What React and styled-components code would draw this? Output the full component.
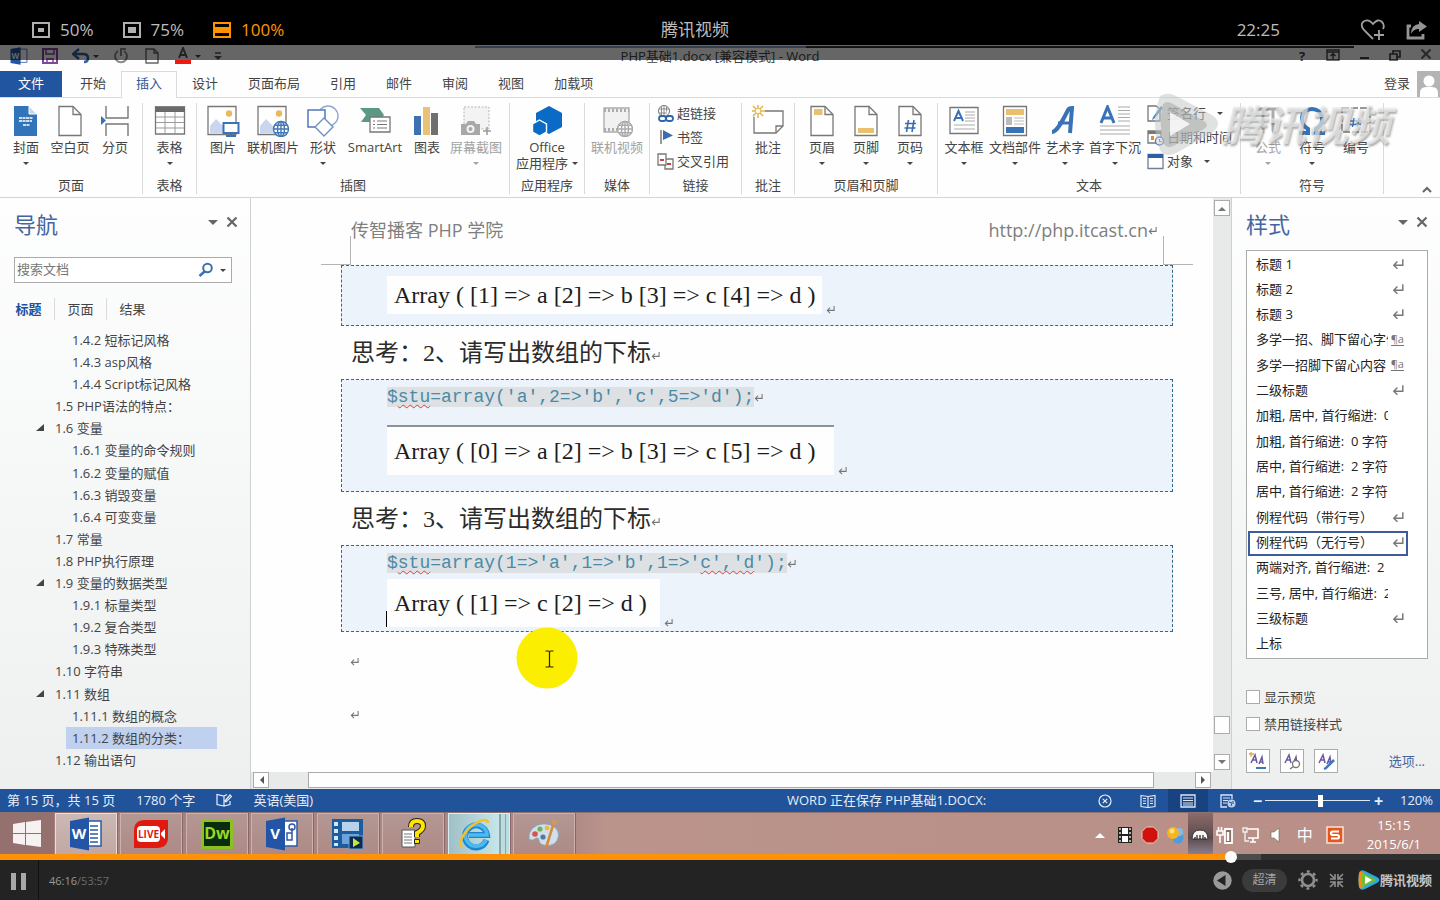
import React from "react";
import styled, { createGlobalStyle, css } from "styled-components";

const blue = "#2b579a";
const line = "#d9dbdb";
const ui = `"Open Sans", "Noto Sans CJK SC", sans-serif`;

const Global = createGlobalStyle`
  *, *::before, *::after { box-sizing: border-box; }
  body { margin: 0; background: #000; font: 13px/16px ${ui}; color: #444; }
  ul { list-style: none; margin: 0; padding: 0; }
  p, h1, h2 { margin: 0; font-weight: 400; }
  svg { display: block; flex: none; }
`;

const plain = css`
  appearance: none;
  border: 0;
  padding: 0;
  margin: 0;
  background: none;
  font: inherit;
  color: inherit;
  white-space: nowrap;
`;

/* ---------- player shell ---------- */

const Player = styled.div`
  min-height: 100vh;
  display: flex;
  flex-direction: column;
`;

const TopBar = styled.header`
  display: grid;
  grid-template-columns: 1fr auto 1fr;
  align-items: center;
  height: 45px;
  padding: 15px 12px 0 32px;
  background: #000;
  color: #bdbdbd;
  font-size: 17px;
  line-height: 24px;
`;

const Zooms = styled.div`
  display: flex;
  gap: 29px;
`;

const ZoomButton = styled.button`
  ${plain}
  display: flex;
  align-items: center;
  gap: 10px;
  color: ${(p) => (p.$on ? "#ff9400" : "#bdbdbd")};
`;

const VideoTitle = styled.span`
  padding-right: 70px;
`;

const TopRight = styled.div`
  display: flex;
  align-items: center;
  justify-content: flex-end;
  color: #a9a9a9;
`;

const Clock = styled.span`
  color: #bdbdbd;
  margin-right: 80px;
`;

const TopIcon = styled.button`
  ${plain}
  margin-left: ${(p) => p.$gap || 0}px;
`;

const Frame = styled.main`
  position: relative;
  flex: 1;
  display: flex;
  flex-direction: column;
  background: #fdfefd;
`;

const Shade = styled.div`
  position: absolute;
  z-index: 2;
  inset: 0 0 auto 0;
  height: 15px;
  background: rgba(0, 0, 0, 0.6);
  pointer-events: none;
`;

/* ---------- word: title, tabs ---------- */

const TitleBar = styled.div`
  display: grid;
  grid-template-columns: 1fr auto 1fr;
  align-items: center;
  height: 26px;
  padding-bottom: 4px;
  background: linear-gradient(90deg, transparent 33%, #7f9cc4 33% 56%, #333 56% 94%, transparent 94%) 0 1px / 100% 2px no-repeat;
`;

const Quick = styled.div`
  display: flex;
  align-items: center;
  gap: 13px;
  padding-left: 10px;
`;

const QuickButton = styled.button`
  ${plain}
  display: flex;
  align-items: center;
  gap: 3px;
`;

const WindowButtons = styled.div`
  display: flex;
  justify-content: flex-end;
  gap: 3px;
`;

const WindowButton = styled.button`
  ${plain}
  width: 28px;
  display: flex;
  justify-content: center;
  font-weight: 700;
`;

const Tabs = styled.nav`
  display: flex;
  height: 27px;
  border-bottom: 1px solid ${line};
`;

const Tab = styled.button`
  ${plain}
  height: 27px;
  padding: 0 14px 4px;
  border: 1px solid transparent;
  border-bottom: 0;
  ${(p) => p.$on && css`
    color: ${blue};
    border-color: ${line};
    background: #fdfefd;
  `}
`;

const FileTab = styled.button`
  ${plain}
  width: 62px;
  height: 26px;
  padding-bottom: 2px;
  margin-right: 3px;
  background: #2255a0;
  color: #fff;
`;

const Account = styled.button`
  ${plain}
  display: flex;
  align-items: center;
  gap: 7px;
  margin-left: auto;
`;

const AccountName = styled.span`
  padding-bottom: 3px;
`;

/* ---------- ribbon ---------- */

const Ribbon = styled.div`
  position: relative;
  display: flex;
  height: 100px;
  padding-top: 5px;
  border-bottom: 1px solid #d2d4d5;
`;

const Group = styled.section`
  display: flex;
  flex-direction: column;
  flex: none;
  justify-content: space-between;
  height: 91px;
  padding-bottom: 1px;
  border-right: 1px solid ${line};
`;

const GroupBody = styled.div`
  display: flex;
  padding: 2px ${(p) => p.$end ?? p.$pad ?? 0}px 0 ${(p) => p.$pad || 0}px;
`;

const GroupName = styled.h2`
  font-size: 13px;
  line-height: 16px;
  text-align: center;
`;

const Tool = styled.button`
  ${plain}
  display: flex;
  flex-direction: column;
  align-items: center;
  justify-content: flex-start;
  width: ${(p) => p.$w}px;
  color: ${(p) => (p.$off ? "#a3a3a3" : "#444")};
`;

const ToolName = styled.span`
  margin-top: 2px;
  line-height: 16px;
`;

const ToolMore = styled.span`
  display: flex;
  align-items: center;
  gap: 4px;
  height: 16px;
`;

const SmallTools = styled.div`
  display: flex;
  flex-direction: column;
  width: ${(p) => p.$w}px;
  padding-left: 7px;
`;

const SmallTool = styled.button`
  ${plain}
  display: flex;
  align-items: center;
  gap: 3px;
  height: 24px;
  margin-top: ${(p) => (p.$first ? "-4px" : 0)};
`;

const SmallMore = styled.span`
  margin-left: 8px;
`;

const Caret = styled.i`
  display: block;
  flex: none;
  border: ${(p) => p.$size || 3}px solid transparent;
  border-top-color: currentColor;
  border-bottom: 0;
`;

const Collapse = styled.button`
  ${plain}
  align-self: flex-end;
  margin: 0 8px 4px auto;
`;

const Watermark = styled.div`
  position: absolute;
  top: -6px;
  right: 50px;
  display: flex;
  align-items: center;
  font-size: 42px;
  line-height: 66px;
  font-style: italic;
  font-weight: 700;
  color: rgba(232, 233, 233, 0.7);
  text-shadow: 1px 2px 2px rgba(100, 100, 100, 0.5);
  pointer-events: none;
`;

/* ---------- workspace ---------- */

const Workspace = styled.div`
  flex: 1;
  display: flex;
`;

const pane = css`
  flex: none;
  display: flex;
  flex-direction: column;
  background: linear-gradient(#fdfefd, #f8f9f9 35%, #eeefef);
`;

const NavPane = styled.aside`
  ${pane}
  width: 251px;
  border-right: 1px solid #cfd1d1;
  padding: 12px 12px 18px 14px;
`;

const StylePane = styled.aside`
  ${pane}
  width: 209px;
  border-left: 1px solid #cfd1d1;
  padding: 12px 12px 16px 14px;
`;

const PaneHead = styled.div`
  display: flex;
  align-items: center;
  gap: 8px;
`;

const PaneTitle = styled.h1`
  flex: 1;
  font-size: 22px;
  line-height: 28px;
  padding-bottom: 4px;
  color: #44659f;
`;

const PaneButton = styled.button`
  ${plain}
  display: flex;
  margin-top: -8px;
  color: #666;
`;

const SearchBox = styled.label`
  display: flex;
  align-items: center;
  gap: 6px;
  height: 26px;
  margin: 15px 6px 0 0;
  padding: 0 5px 0 2px;
  border: 1px solid #ababab;
  background: #fff;
`;

const SearchInput = styled.input`
  ${plain}
  flex: 1;
  min-width: 0;
  padding-bottom: 2px;
  outline: 0;
  &::placeholder { color: #777; opacity: 1; }
`;

const NavTabs = styled.div`
  display: flex;
  margin: 15px 0 9px -12px;
`;

const NavTab = styled.button`
  ${plain}
  width: 52px;
  height: 22px;
  border-left: 1px solid ${(p) => (p.$on ? "transparent" : line)};
  color: ${(p) => (p.$on ? "#1f4e9a" : "#444")};
  font-weight: ${(p) => (p.$on ? 700 : 400)};
`;

const Tree = styled.ul`
  flex: 1;
  display: flex;
  flex-direction: column;
  justify-content: space-between;
  padding-right: 21px;
`;

const TreeLink = styled.a`
  display: flex;
  align-items: center;
  height: 22px;
  margin-left: ${(p) => (p.$deep ? 52 : 22)}px;
  padding-left: ${(p) => (p.$deep ? 6 : 0)}px;
  color: inherit;
  text-decoration: none;
  white-space: nowrap;
  background: ${(p) => (p.$on ? "#c0d1f0" : "none")};
`;

const Twist = styled.span`
  width: 19px;
  display: flex;
`;

const Editor = styled.div`
  flex: 1;
  min-width: 0;
  display: flex;
  flex-direction: column;
  background: #e8e9e9;
`;

const EditorRow = styled.div`
  flex: 1;
  display: flex;
`;

const Page = styled.article`
  position: relative;
  flex: 1;
  background: #fdfefd;
  padding: 0 20px 0 70px;
`;

const PageHead = styled.div`
  display: flex;
  align-items: flex-end;
  height: 67px;
  color: #7f7f7f;
  white-space: nowrap;
`;

const Corner = styled.div`
  width: 30px;
  height: 29px;
  border-bottom: 1px solid #b4b4b4;
  border-${(p) => p.$side}: 1px solid #b4b4b4;
`;

const HeadText = styled.span`
  display: flex;
  align-items: center;
  font-size: 18px;
  line-height: 24px;
  padding-bottom: 23px;
  margin-left: ${(p) => (p.$end ? "auto" : 0)};
  margin-right: ${(p) => (p.$end ? 6 : 0)}px;
`;

const CodeBox = styled.section`
  height: ${(p) => p.$h}px;
  margin: 0 20px;
  padding: ${(p) => p.$top}px 0 0 45px;
  border: 1px dashed #2f6a8a;
  background: #edf3fa;
`;

const CodeLine = styled.p`
  display: flex;
  align-items: center;
  font: 18px/20px "Liberation Mono", monospace;
  color: #4a8aa8;
  white-space: nowrap;
  margin-bottom: ${(p) => p.$below}px;
`;

const Code = styled.code`
  font: inherit;
  background: #dde1e3;
`;

const Misspelt = styled.span`
  text-decoration: underline wavy #e0403a 1px;
  text-decoration-skip-ink: none;
  text-underline-offset: 2px;
`;

const Shot = styled.div`
  display: flex;
  align-items: flex-end;
  gap: 4px;
`;

const ShotText = styled.p`
  position: relative;
  width: ${(p) => p.$w}px;
  padding: ${(p) => p.$pad}px 7px;
  font: 24px/30px "Liberation Serif", serif;
  color: #1c1c1c;
  background: #fdfefd;
  white-space: nowrap;
  border-top: ${(p) => (p.$rule ? "2px solid #8f9396" : "0")};
  ${(p) => p.$caret && css`
    &::before {
      content: "";
      position: absolute;
      left: -1px;
      bottom: 0;
      width: 1px;
      height: 16px;
      background: #000;
    }
  `}
`;

const Para = styled.p`
  display: flex;
  align-items: center;
  height: 53px;
  padding-left: ${(p) => (p.$empty ? 29 : 30)}px;
  font: 24px/32px "Liberation Serif", "Noto Sans CJK SC", serif;
  color: #2b2b2b;
  white-space: nowrap;
  svg { margin-top: 6px; }
`;

const Pointer = styled.div`
  position: absolute;
  left: 265px;
  top: 429px;
`;

const VScroll = styled.div`
  width: 18px;
  display: flex;
  flex-direction: column;
  align-items: center;
  padding: 2px 0;
`;

const HScroll = styled.div`
  display: flex;
  height: 17px;
  padding: 0 20px 0 2px;
`;

const ScrollButton = styled.button`
  ${plain}
  width: 16px;
  height: 16px;
  display: grid;
  place-items: center;
  border: 1px solid #ababab;
  background: #fdfefd;
  color: #666;
`;

const Thumb = styled.div`
  border: 1px solid #ababab;
  background: #fdfefd;
  ${(p) => (p.$v
    ? css`width: 16px; height: 18px; margin: auto 0 20px;`
    : css`flex: 1; height: 16px; margin: 0 41px 0 39px;`)}
`;

const StyleList = styled.ul`
  flex: 1;
  display: flex;
  flex-direction: column;
  justify-content: space-between;
  margin-top: 8px;
  padding: 1px;
  border: 1px solid #ababab;
  background: #fff;
`;

const StyleItem = styled.button`
  ${plain}
  display: flex;
  align-items: center;
  justify-content: space-between;
  width: 160px;
  height: 25px;
  padding: 0 2px 2px 6px;
  color: #222;
  border: 2px solid ${(p) => (p.$on ? "#3c5d9b" : "transparent")};
`;

const StyleName = styled.span`
  width: 132px;
  overflow: hidden;
  text-align: left;
  white-space: pre;
`;

const LinkMark = styled.span`
  font-size: 11px;
  line-height: 12px;
  border-bottom: 1px solid #777;
  color: #777;
`;

const Check = styled.label`
  display: flex;
  align-items: center;
  gap: 4px;
  height: 27px;
`;

const CheckInput = styled.input`
  appearance: none;
  width: 14px;
  height: 14px;
  margin: 0;
  border: 1px solid #ababab;
  background: #fff;
`;

const Checks = styled.div`
  margin-top: 24px;
`;

const PaneFoot = styled.div`
  display: flex;
  align-items: center;
  gap: 10px;
  margin-top: 12px;
  padding-right: 3px;
`;

const SquareButton = styled.button`
  ${plain}
  width: 24px;
  height: 24px;
  border: 1px solid #ababab;
  background: #fdfefd;
  display: grid;
  place-items: center;
`;

const Options = styled.a`
  margin-left: auto;
  color: #44659f;
  text-decoration: none;
`;

/* ---------- status bar ---------- */

const Status = styled.footer`
  display: flex;
  align-items: center;
  height: 23px;
  padding: 0 7px;
  background: #21539a;
  color: #e6eefa;
  white-space: nowrap;
`;

const StatusItem = styled.span`
  margin-right: 21px;
  padding-bottom: 2px;
`;

const StatusRight = styled.div`
  flex: 0 0 646px;
  margin-left: auto;
  display: flex;
  align-items: center;
`;

const Saving = styled.span`
  padding-bottom: 2px;
`;

const CancelButton = styled.button`
  ${plain}
  margin: 0 16px 0 auto;
`;

const ViewButtons = styled.div`
  display: flex;
  margin-right: 5px;
`;

const ViewButton = styled.button`
  ${plain}
  display: grid;
  place-items: center;
  width: 40px;
  height: 23px;
  background: ${(p) => (p.$on ? "#174481" : "none")};
`;

const ZoomSide = styled.span`
  width: 8px;
  font-size: 16px;
  font-weight: 700;
  text-align: center;
`;

const ZoomRange = styled.input`
  appearance: none;
  width: 105px;
  height: 12px;
  margin: 0 4px;
  background: linear-gradient(#dfe8f5, #dfe8f5) 0 50% / 100% 1px no-repeat;
  &::-webkit-slider-thumb {
    appearance: none;
    width: 5px;
    height: 12px;
    background: #fff;
  }
`;

const Percent = styled.span`
  width: 51px;
  padding-bottom: 2px;
  text-align: right;
`;

/* ---------- taskbar ---------- */

const Taskbar = styled.div`
  display: flex;
  align-items: stretch;
  height: 42px;
  background: linear-gradient(90deg, #a67f7c 0, #b08a86 40%, #ba938b 42%, #b98f87 100%);
  border-top: 1px solid #8d7274;
  color: #fff;
`;

const Start = styled.button`
  ${plain}
  width: 54px;
  display: grid;
  place-items: center;
  background: #94706e;
`;

const Apps = styled.div`
  display: flex;
  justify-content: space-between;
  width: 521px;
  padding-left: 1px;
`;

const TaskButton = styled.button`
  ${plain}
  width: 62px;
  display: grid;
  place-items: center;
  border: 1px solid #cdb1ad;
  border-bottom: 0;
  background: linear-gradient(#b39793, #ae8a86);
  box-shadow: 1px 0 0 #86686a;
  ${(p) => p.$look === "active" && css`background: linear-gradient(#cbb8b4, #c2a8a4); border-color: #eadcd9;`}
  ${(p) => p.$look === "glow" && css`
    background: linear-gradient(90deg, #9fc0c6, #c6e6ea 84%, #8aa6ab 84% 87%, #bcdde0 87% 93%, #8aa6ab 93% 95%, #bcdde0 95%);
    border-color: #d9f0f2;
    padding-right: 8px;
  `}
`;

const Tray = styled.div`
  display: flex;
  align-items: center;
  margin-left: auto;
  padding-right: 19px;
`;

const TrayItem = styled.button`
  ${plain}
  width: ${(p) => p.$w || 25}px;
  height: 41px;
  padding-top: 2px;
  display: grid;
  place-items: center;
  font-size: 16px;
  background: ${(p) => (p.$dark ? "linear-gradient(#8b6c6a, #5d4a4b 60%, #8a7e90)" : "none")};
`;

const TrayClock = styled.time`
  text-align: center;
  line-height: 19px;
  margin-left: 18px;
  padding-top: 2px;
`;

/* ---------- player controls ---------- */

const Seek = styled.input`
  appearance: none;
  display: block;
  position: relative;
  z-index: 3;
  width: 100%;
  height: 6px;
  margin: 0;
  background: linear-gradient(90deg, #ff9206 0 85.5%, #4c4c4c 85.5% 87.6%, #303030 87.6%);
  &::-webkit-slider-thumb {
    appearance: none;
    width: 12px;
    height: 12px;
    border-radius: 50%;
    background: #fff;
  }
`;

const Controls = styled.footer`
  display: flex;
  align-items: center;
  height: 40px;
  padding-right: 8px;
  background: #232323;
  color: #8c8c8c;
`;

const Pause = styled.button`
  ${plain}
  width: 39px;
  height: 40px;
  padding: 3px 0 0 11px;
  border-right: 1px solid #111;
`;

const Times = styled.span`
  padding: 2px 0 0 10px;
  font-size: 11px;
  color: #6c6c6c;
`;

const Now = styled.b`
  font-weight: 400;
  color: #999;
`;

const ControlsRight = styled.div`
  display: flex;
  align-items: center;
  margin-left: auto;
`;

const Control = styled.button`
  ${plain}
  margin-right: ${(p) => p.$after}px;
`;

const Quality = styled.button`
  ${plain}
  height: 23px;
  width: 45px;
  margin-right: 11px;
  border-radius: 12px;
  background: #3b3b3b;
  font-size: 12px;
  color: #a5a5a5;
`;

const Brand = styled.a`
  display: flex;
  align-items: center;
  font-weight: 700;
  color: #c4c4c4;
  text-decoration: none;
  white-space: nowrap;
`;

/* ---------- drawings ---------- */

const Svg = ({ w = 32, h = w, vw = w, vh = h, children }) => (
  <svg width={w} height={h} viewBox={`0 0 ${vw} ${vh}`} fill="none" aria-hidden="true">{children}</svg>
);

const G = "#777";
const Sheet = ({ children }) => (
  <Svg><path d="M5 1.500h14l8 8v21H5z" fill="#fff" stroke={G} strokeWidth="1.300" /><path d="M19 1.500v8h8" stroke={G} strokeWidth="1.300" />{children}</Svg>
);
const Globe = ({ x, y, c }) => (
  <g transform={`translate(${x} ${y})`} stroke={c} strokeWidth="1.400" fill="#fff">
    <circle r="7.500" /><ellipse rx="3.500" ry="7.500" fill="none" /><path d="M-7.500 0h15M-6.500-3.800h13M-6.500 3.800h13M0-7.500v15" />
  </g>
);
const Photo = ({ children }) => (
  <Svg w={34} h={32}>
    <path d="M2 1.500h28v28H2z" fill="#fff" stroke={G} strokeWidth="1.300" />
    <path d="M4 28v-7l6-7 8 8v6z" fill="#c9d6ee" /><circle cx="23" cy="8.500" r="3.200" fill="#eab95c" />{children}
  </Svg>
);

const icons = {
  cover: <Svg><path d="M4 1h15l8 8v22H4z" fill="#3274ba" /><path d="M19 1v8h8z" fill="#c4d9ee" stroke="#fff" /><path d="M9 13h14M9 16h13M13 20h7" stroke="#fff" strokeWidth="1.600" strokeDasharray="3 .5" /></Svg>,
  blank: <Sheet />,
  brk: <Svg><path d="M7 1v12h22V1M7 31V19h22v12" stroke={G} strokeWidth="1.400" /><path d="M2 11v9l5-4.500z" fill="#3274ba" /></Svg>,
  table: <Svg><path d="M1.500 2h29v27h-29z" fill="#fff" stroke={G} strokeWidth="1.300" /><path d="M1 1.500h30V7H1z" fill="#6b6b6b" /><path d="M2 12h28M2 17.500h28M2 23h28M11 7v22M21 7v22" stroke="#9b9b9b" /></Svg>,
  pic: <Photo><path d="M17.500 18h15v10h-15z" fill="#fff" stroke="#3a73b5" strokeWidth="2" /><path d="M25 28v3M20 31h10" stroke="#3a73b5" strokeWidth="2" /></Photo>,
  webpic: <Photo><Globe x={25} y={24} c="#4077b5" /></Photo>,
  shapes: <Svg><circle cx="21" cy="11" r="10" stroke="#8fa9d3" strokeWidth="1.400" fill="#fff" /><path d="M1 5h17v17H1z" fill="#fff" stroke="#5278b5" strokeWidth="1.500" /><path d="M17 13l9 9-9 9-9-9z" fill="#fff" stroke="#6d8fc4" strokeWidth="1.400" /></Svg>,
  smart: <Svg><path d="M1 3h19l5 7-5 7H2l5-7z" fill="#5b9a82" /><path d="M11 12h20v15H11z" fill="#fff" stroke={G} strokeWidth="1.300" /><path d="M14 16h2M18 16h10M14 19.500h2M18 19.500h10M14 23h2M18 23h10" stroke={G} /></Svg>,
  chart: <Svg><path d="M3 11h7v19H3z" fill="#3c72b4" /><path d="M12 2h7v28h-7z" fill="#eac277" /><path d="M20 8h7v22h-7z" fill="#6f6f6f" /></Svg>,
  shot: <Svg><path d="M4 2h25v22H4z" stroke="#b5b5b5" strokeDasharray="2 1.500" fill="#f3f3f3" /><path d="M1 19h5l2-3h6l2 3h4v11H1z" fill="#a8a8a8" /><circle cx="10.500" cy="24" r="4" fill="#f3f3f3" /><circle cx="10.500" cy="24" r="2" fill="#a8a8a8" /><path d="M27 22v8M23 26h8" stroke="#999" strokeWidth="1.500" /></Svg>,
  office: <Svg><path d="M18 1l13 7v14l-13 7-13-7V8z" fill="#0a6bc7" /><path d="M8.500 15l7 4v8l-7 4-7-4v-8z" fill="#0a6bc7" stroke="#fdfefd" strokeWidth="1.400" /></Svg>,
  video: <Svg><path d="M3 3h25v24H3z" fill="#f1f1f1" stroke="#aaa" strokeWidth="1.300" /><path d="M3 5.500h25M3 24.500h25" stroke="#aaa" strokeWidth="3" strokeDasharray="2 2" /><Globe x={24} y={24} c="#aaa" /></Svg>,
  note: <Svg><path d="M2 6h29v15l-7 7H2z" fill="#fff" stroke={G} strokeWidth="1.300" /><path d="M31 21h-7v7" stroke={G} strokeWidth="1.300" /><circle cx="6" cy="6" r="7" fill="#fff" /><path d="M6-1v14M-1 6h14M1 1l10 10M11 1L1 11" stroke="#e8b450" strokeWidth="1.600" /><circle cx="6" cy="6" r="2.800" fill="#fff" stroke="#e8b450" /></Svg>,
  header: <Sheet><path d="M8 4h8.500v6H8z" fill="#e9c06f" /></Sheet>,
  footer: <Sheet><path d="M8 23h16v5H8z" fill="#e9c06f" /></Sheet>,
  pageno: <Sheet><path d="M14.500 15l-2 12M20 15l-2 12M11 18.500h11M10.500 23h11" stroke="#3a6db0" strokeWidth="1.600" /></Sheet>,
  textbox: <Svg><path d="M2 2.500h28v26H2z" fill="#fff" stroke={G} strokeWidth="1.300" /><path d="M6 16l4.500-10L15 16M7.500 13h6" stroke="#3a73b5" strokeWidth="2" /><path d="M17 7h10M17 10h10M17 13h10M17 16h10M6 20h21M6 24h21" stroke="#aaa" /></Svg>,
  parts: <Svg><path d="M4.500 1.500h23v29h-23z" fill="#fff" stroke={G} strokeWidth="1.300" /><path d="M7 4h18v6H7z" fill="#e9c06f" /><path d="M7 12h6v8H7z" fill="#bbb" /><path d="M15 13h10M15 16h10M15 19h10" stroke="#bbb" /><path d="M7 22h18v6H7z" fill="#3a73b5" /></Svg>,
  art: <Svg><path d="M3 27c5 0 10-10 16-22 1-2 2-2 4-2l-2 25" stroke="#3a73b5" strokeWidth="4" /><path d="M9 18h13" stroke="#3a73b5" strokeWidth="3" /></Svg>,
  drop: <Svg><path d="M2 18L8.500 2 15 18M4.500 13h8" stroke="#3a73b5" strokeWidth="3" /><path d="M19 2h12M19 5.500h12M19 9h12M19 12.500h12M19 16h12M1 21h30M1 25h30M1 29h30" stroke="#aaa" /></Svg>,
  formula: <Svg><path d="M5 4h22M11 4v24M21 4v21q0 3 4 3" stroke="#aaa" strokeWidth="3" /></Svg>,
  omega: <Svg><path d="M3 28h9v-4C2 18 5 4 16 4s14 14 4 20v4h9" stroke="#3274ba" strokeWidth="4" /></Svg>,
  number: <Svg><path d="M2 3h28v24H2z" stroke={G} strokeWidth="1.400" strokeDasharray="7 2" /><path d="M14 13l-1.500 9M19 13l-1.500 9M10 16h11M10 19.500h11" stroke="#3a6db0" strokeWidth="1.400" /></Svg>,
  link: <Svg w={17}><circle cx="7" cy="6" r="5.500" stroke="#777" /><path d="M2 4h10M2 8h8M7 1v10M4.500 1.500v9M9.500 1.500v5" stroke="#777" strokeWidth=".8" /><rect x="2" y="11" width="7" height="5" rx="2.500" stroke="#2f66ac" strokeWidth="1.800" /><rect x="9" y="11" width="7" height="5" rx="2.500" stroke="#2f66ac" strokeWidth="1.800" /></Svg>,
  flag: <Svg w={17}><path d="M4 1v14" stroke="#777" strokeWidth="1.500" /><path d="M6 1l10 5.500L6 11z" fill="#3a6db0" /></Svg>,
  xref: <Svg w={17}><path d="M1 1h8v11H1zM9 6h7v10H8v-4" stroke="#777" strokeWidth="1.300" /><path d="M3 7h4M10 11h4" stroke="#cc3d3d" strokeWidth="2" /></Svg>,
  sign: <Svg w={17}><path d="M1 1h8l4 3v12H1z" stroke="#777" fill="#fff" strokeWidth="1.300" /><path d="M16 3L7 14l-2 1 1-3L14 1z" fill="#4f8bc4" /></Svg>,
  date: <Svg w={17}><path d="M1 2h13v12H1z" stroke="#777" strokeWidth="1.300" fill="#fff" /><path d="M1 3.500h13" stroke="#777" strokeWidth="3" /><path d="M4 7h3v4H4z" fill="#dd8a3c" /><circle cx="12.500" cy="12" r="4" fill="#fff" stroke="#4f7cb5" strokeWidth="1.400" /><path d="M12.500 10v2.500h2" stroke="#4f7cb5" /></Svg>,
  object: <Svg w={17}><path d="M1 1.500h15v14H1z" fill="#fff" stroke="#6e7f99" strokeWidth="1.300" /><path d="M1 1h15v4H1z" fill="#2f5fa3" /></Svg>,
};

const ReturnMark = ({ size = 9 }) => (
  <Svg w={size} vw={10} vh={10}><path d="M9 1v5H1.500M4.500 3L1.500 6l3 3" stroke="#777" strokeWidth="1.200" /></Svg>
);

const Close = () => <Svg w={12}><path d="M1.500 1.500l9 9M10.500 1.500l-9 9" stroke="#666" strokeWidth="2.200" /></Svg>;

const OfficeTile = ({ letter, size = 34, children }) => (
  <Svg w={size} vw={34} vh={34}>
    <path d="M17 4h15v25H17z" fill="#fff" stroke="#2c5aa8" strokeWidth="1.500" />
    {children}
    <path d="M1 4l19-3.500v33L1 30z" fill="#2355a6" />
    <text x="10" y="22" textAnchor="middle" fontSize="15" fontWeight="700" fontFamily="Open Sans" fill="#fff">{letter}</text>
  </Svg>
);

/* ---------- data ---------- */

const outline = [
  ["1.4.2 短标记风格", 1], ["1.4.3 asp风格", 1], ["1.4.4 Script标记风格", 1], ["1.5 PHP语法的特点：", 0],
  ["1.6 变量", 0, 1], ["1.6.1 变量的命令规则", 1], ["1.6.2 变量的赋值", 1], ["1.6.3 销毁变量", 1],
  ["1.6.4 可变变量", 1], ["1.7 常量", 0], ["1.8 PHP执行原理", 0], ["1.9 变量的数据类型", 0, 1],
  ["1.9.1 标量类型", 1], ["1.9.2 复合类型", 1], ["1.9.3 特殊类型", 1], ["1.10 字符串", 0],
  ["1.11 数组", 0, 1], ["1.11.1 数组的概念", 1], ["1.11.2 数组的分类：", 1, 0, 1], ["1.12 输出语句", 0],
];

const styleNames = [
  ["标题 1", "r"], ["标题 2", "r"], ["标题 3", "r"], ["多学一招、脚下留心字体", "a"], ["多学一招脚下留心内容", "a"],
  ["二级标题", "r"], ["加粗, 居中, 首行缩进:  0"], ["加粗, 首行缩进:  0 字符"], ["居中, 首行缩进:  2 字符"],
  ["居中, 首行缩进:  2 字符"], ["例程代码（带行号）", "r"], ["例程代码（无行号）", "r", 1], ["两端对齐, 首行缩进:  2"],
  ["三号, 居中, 首行缩进:  2"], ["三级标题", "r"], ["上标"],
];

const T = ({ icon, name, w, more, off }) => (
  <Tool $w={w} $off={off}>
    {icons[icon]}
    <ToolName>{name}</ToolName>
    {more && <ToolMore>{more !== true && more}<Caret /></ToolMore>}
  </Tool>
);

const S = ({ icon, name, first, more }) => (
  <SmallTool $first={first}>{icons[icon]}<span>{name}</span>{more && <SmallMore><Caret /></SmallMore>}</SmallTool>
);

const RibbonGroup = ({ name, pad, end, children }) => (
  <Group><GroupBody $pad={pad} $end={end}>{children}</GroupBody><GroupName>{name}</GroupName></Group>
);

const WordRibbon = () => (
  <Ribbon>
    <RibbonGroup name="页面" pad={4}>
      <T icon="cover" name="封面" w={44} more /><T icon="blank" name="空白页" w={44} /><T icon="brk" name="分页" w={46} />
    </RibbonGroup>
    <RibbonGroup name="表格"><T icon="table" name="表格" w={53} more /></RibbonGroup>
    <RibbonGroup name="插图" end={10}>
      <T icon="pic" name="图片" w={52} /><T icon="webpic" name="联机图片" w={48} /><T icon="shapes" name="形状" w={52} more />
      <T icon="smart" name="SmartArt" w={52} /><T icon="chart" name="图表" w={52} /><T icon="shot" name="屏幕截图" w={46} more off />
    </RibbonGroup>
    <RibbonGroup name="应用程序"><T icon="office" name="Office" w={74} more="应用程序" /></RibbonGroup>
    <RibbonGroup name="媒体"><T icon="video" name="联机视频" w={64} off /></RibbonGroup>
    <RibbonGroup name="链接">
      <SmallTools $w={91}><S icon="link" name="超链接" first /><S icon="flag" name="书签" /><S icon="xref" name="交叉引用" /></SmallTools>
    </RibbonGroup>
    <RibbonGroup name="批注"><T icon="note" name="批注" w={52} /></RibbonGroup>
    <RibbonGroup name="页眉和页脚" pad={5}>
      <T icon="header" name="页眉" w={44} more /><T icon="footer" name="页脚" w={44} more /><T icon="pageno" name="页码" w={44} more />
    </RibbonGroup>
    <RibbonGroup name="文本">
      <T icon="textbox" name="文本框" w={52} more /><T icon="parts" name="文档部件" w={50} more />
      <T icon="art" name="艺术字" w={50} more /><T icon="drop" name="首字下沉" w={50} more />
      <SmallTools $w={100}><S icon="sign" name="签名行" first more /><S icon="date" name="日期和时间" /><S icon="object" name="对象" more /></SmallTools>
    </RibbonGroup>
    <RibbonGroup name="符号" pad={5}>
      <T icon="formula" name="公式" w={44} more off /><T icon="omega" name="符号" w={44} more /><T icon="number" name="编号" w={44} />
    </RibbonGroup>
    <Collapse aria-label="折叠功能区"><Svg w={10} h={8}><path d="M1 7l4-4 4 4" stroke="#666" strokeWidth="2" /></Svg></Collapse>
    <Watermark>
      <Svg w={76} h={66}>
        <path d="M14 4q8-5 18 1l34 18q12 8 0 18L32 60q-12 7-18-2Q4 32 14 4z" fill="#c4c6c5" fillOpacity=".5" />
        <path d="M17 12q4-4 10 0l31 17q6 4 0 8L27 54q-6 3-9-2-6-20-1-40z" fill="#a7a9a8" fillOpacity=".55" />
        <path d="M24 20l20 12-20 12z" fill="#fff" fillOpacity=".8" />
      </Svg>
      腾讯视频
    </Watermark>
  </Ribbon>
);

const Navigation = () => (
  <NavPane>
    <PaneHead>
      <PaneTitle>导航</PaneTitle>
      <PaneButton aria-label="菜单"><Caret $size={5} /></PaneButton>
      <PaneButton aria-label="关闭"><Close /></PaneButton>
    </PaneHead>
    <SearchBox>
      <SearchInput aria-label="搜索文档" placeholder="搜索文档" />
      <Svg w={16}><circle cx="9.500" cy="6" r="4.300" stroke="#3d6eb5" strokeWidth="2" /><path d="M6.500 9.500L1.500 14" stroke="#3d6eb5" strokeWidth="2.500" /></Svg>
      <Caret />
    </SearchBox>
    <NavTabs><NavTab $on>标题</NavTab><NavTab>页面</NavTab><NavTab>结果</NavTab></NavTabs>
    <Tree>
      {outline.map(([text, deep, open, on]) => (
        <li key={text}>
          <TreeLink href="#" $deep={deep} $on={on}>
            {!deep && <Twist>{open ? <Svg w={8}><path d="M8 0v7H0z" fill="#444" /></Svg> : null}</Twist>}
            {text}
          </TreeLink>
        </li>
      ))}
    </Tree>
  </NavPane>
);

const Document = () => (
  <Editor>
    <EditorRow>
      <Page>
        <PageHead>
          <Corner $side="right" />
          <HeadText>传智播客 PHP 学院</HeadText>
          <HeadText $end>http://php.itcast.cn<ReturnMark /></HeadText>
          <Corner $side="left" />
        </PageHead>
        <CodeBox $h={61} $top={10}>
          <Shot><ShotText $w={435} $pad={4}>{"Array ( [1] => a [2] => b [3] => c [4] => d )"}</ShotText><ReturnMark /></Shot>
        </CodeBox>
        <Para>思考：2、请写出数组的下标<ReturnMark /></Para>
        <CodeBox $h={113} $top={7}>
          <CodeLine $below={18}><Code>$<Misspelt>stu</Misspelt>{"=array('a',2=>'b','c',5=>'d');"}</Code><ReturnMark /></CodeLine>
          <Shot><ShotText $w={447} $pad={9} $rule>{"Array ( [0] => a [2] => b [3] => c [5] => d )"}</ShotText><ReturnMark /></Shot>
        </CodeBox>
        <Para>思考：3、请写出数组的下标<ReturnMark /></Para>
        <CodeBox $h={87} $top={7}>
          <CodeLine $below={6}><Code>$<Misspelt>stu</Misspelt>{"=array(1=>'a',1=>'b',1=>'"}<Misspelt>c','d</Misspelt>{"');"}</Code><ReturnMark /></CodeLine>
          <Shot><ShotText $w={273} $pad={9} $caret>{"Array ( [1] => c [2] => d )"}</ShotText><ReturnMark /></Shot>
        </CodeBox>
        <Para $empty><ReturnMark /></Para>
        <Para $empty><ReturnMark /></Para>
        <Pointer>
          <Svg w={62}><circle cx="31" cy="31" r="30.500" fill="#fbee00" /><path d="M29.500 24h3q1 0 1 2v12q0 2-1 2h-3M37.500 24h-3q-1 0-1 2M37.500 40h-3q-1 0-1-2" stroke="#222" strokeWidth="1.200" /></Svg>
        </Pointer>
      </Page>
      <VScroll>
        <ScrollButton aria-label="向上滚动"><Svg w={8} h={5}><path d="M0 5l4-4 4 4z" fill="#777" /></Svg></ScrollButton>
        <Thumb $v />
        <ScrollButton aria-label="向下滚动"><Svg w={8} h={5}><path d="M0 0l4 4 4-4z" fill="#777" /></Svg></ScrollButton>
      </VScroll>
    </EditorRow>
    <HScroll>
      <ScrollButton aria-label="向左滚动"><Svg w={5} h={8}><path d="M5 0L1 4l4 4z" fill="#555" /></Svg></ScrollButton>
      <Thumb />
      <ScrollButton aria-label="向右滚动"><Svg w={5} h={8}><path d="M0 0l4 4-4 4z" fill="#555" /></Svg></ScrollButton>
    </HScroll>
  </Editor>
);

const StyleIcon = ({ children }) => (
  <Svg w={20}><path d="M3 12l4-8 2 8M5 9h4M11 13l3-7 1 7M12 11h3" stroke="#6a5aa0" strokeWidth="1.500" />{children}</Svg>
);

const Styles = () => (
  <StylePane>
    <PaneHead>
      <PaneTitle>样式</PaneTitle>
      <PaneButton aria-label="菜单"><Caret $size={5} /></PaneButton>
      <PaneButton aria-label="关闭"><Close /></PaneButton>
    </PaneHead>
    <StyleList>
      {styleNames.map(([name, mark, on], i) => (
        <li key={i}>
          <StyleItem $on={on}>
            <StyleName>{name}</StyleName>
            {mark === "r" && <ReturnMark size={12} />}
            {mark === "a" && <LinkMark>¶a</LinkMark>}
          </StyleItem>
        </li>
      ))}
    </StyleList>
    <Checks>
      <Check><CheckInput type="checkbox" />显示预览</Check>
      <Check><CheckInput type="checkbox" />禁用链接样式</Check>
    </Checks>
    <PaneFoot>
      <SquareButton aria-label="新建样式"><StyleIcon><path d="M3 1v5M1 3h5" stroke="#e0a94a" strokeWidth="1.300" /><path d="M8 17h10" stroke="#3d78bb" strokeWidth="2" /></StyleIcon></SquareButton>
      <SquareButton aria-label="样式检查器"><StyleIcon><circle cx="14" cy="13" r="3.500" fill="#fff" stroke="#777" strokeWidth="1.300" /><path d="M11.500 15.500L8 18" stroke="#777" strokeWidth="1.500" /></StyleIcon></SquareButton>
      <SquareButton aria-label="管理样式"><StyleIcon><path d="M18 9l-8 8-2 1" stroke="#3d78bb" strokeWidth="2.500" /></StyleIcon></SquareButton>
      <Options href="#">选项...</Options>
    </PaneFoot>
  </StylePane>
);

const WordStatus = () => (
  <Status>
    <StatusItem>第 15 页，共 15 页</StatusItem>
    <StatusItem>1780 个字</StatusItem>
    <StatusItem><Svg w={16} h={14}><path d="M8 3v10l-7-1.500V1.500L8 3l3-1.500M8 13l6-1.500V8M9 8l5-6 1.500 1.500L10 9z" stroke="#e6eefa" strokeWidth="1.200" /></Svg></StatusItem>
    <StatusItem>英语(美国)</StatusItem>
    <StatusRight>
      <Saving>WORD 正在保存 PHP基础1.DOCX:</Saving>
      <CancelButton aria-label="取消"><Svg w={14}><circle cx="7" cy="7" r="6" stroke="#e6eefa" strokeWidth="1.200" /><path d="M4.800 4.800l4.400 4.400M9.200 4.800L4.800 9.200" stroke="#e6eefa" strokeWidth="1.200" /></Svg></CancelButton>
      <ViewButtons>
        <ViewButton aria-label="阅读视图"><Svg w={16} h={14}><path d="M8 2.500v11M1 1.500l7 1 7-1v11l-7 1-7-1z" stroke="#dce6f5" strokeWidth="1.200" /><path d="M3 4.500h3M3 7h3M3 9.500h3M10 4.500h3M10 7h3M10 9.500h3" stroke="#dce6f5" /></Svg></ViewButton>
        <ViewButton aria-label="页面视图" $on><Svg w={16} h={14}><path d="M1 1h14v12H1z" stroke="#dce6f5" strokeWidth="1.300" /><path d="M3 4h10M3 6.500h10M3 9h10M3 11h10" stroke="#dce6f5" /></Svg></ViewButton>
        <ViewButton aria-label="Web 视图"><Svg w={16} h={14}><path d="M12 5V1H1v12h6" stroke="#dce6f5" strokeWidth="1.300" /><path d="M3 4h7M3 6.500h5M3 9h4" stroke="#dce6f5" /><circle cx="11.500" cy="9.500" r="4" fill="#bcd0ec" /><path d="M9 8l3 1-1 3M13 7v3" stroke="#21539a" /></Svg></ViewButton>
      </ViewButtons>
      <ZoomSide>−</ZoomSide>
      <ZoomRange type="range" aria-label="缩放" min="0" max="100" defaultValue="53" />
      <ZoomSide>+</ZoomSide>
      <Percent>120%</Percent>
    </StatusRight>
  </Status>
);

const WindowsTaskbar = () => (
  <Taskbar>
    <Start aria-label="开始"><Svg w={30} h={28}><path d="M1 4l12-2v11H1zM14 2l15-2v13H14zM1 14h12v11L1 23zM14 14h15v13l-15-2z" fill="#f7f2f1" /></Svg></Start>
    <Apps>
      <TaskButton aria-label="Word" $look="active"><OfficeTile letter="W"><path d="M21 9h8M21 13h8M21 17h8M21 21h8M21 25h8" stroke="#2c5aa8" strokeWidth="1.500" /></OfficeTile></TaskButton>
      <TaskButton aria-label="Live"><Svg w={36} h={30}><path d="M1 29V12Q1 1 12 1h23v17q0 11-11 11z" fill="#e01a0e" /><rect x="4" y="7" width="23" height="16" rx="4" fill="#fff" /><path d="M28 14l4-4v10l-4-4z" fill="#fff" /><text x="15.500" y="19" textAnchor="middle" fontSize="10" fontWeight="700" fontFamily="Open Sans" fill="#e01a0e">LIVE</text></Svg></TaskButton>
      <TaskButton aria-label="Dreamweaver"><Svg w={32} h={30}><path d="M1.500 1.500h29v27h-29z" fill="#0c2c10" stroke="#8cc220" strokeWidth="3" /><text x="16" y="20" textAnchor="middle" fontSize="16" fontWeight="700" fontFamily="Open Sans" fill="#97d826">Dw</text></Svg></TaskButton>
      <TaskButton aria-label="Visio"><OfficeTile letter="V"><path d="M22 21v-5h5v7h-5zM27 11v5" stroke="#3556a8" strokeWidth="1.500" /><circle cx="27" cy="10" r="3" stroke="#3556a8" strokeWidth="1.500" /></OfficeTile></TaskButton>
      <TaskButton aria-label="录像"><Svg w={34} h={32}><path d="M1 1h31v29H1z" fill="#1c5d9f" /><path d="M11 4h17v9H11z" fill="#b9d2ec" /><path d="M11 16h17v10H11z" fill="#6da3d8" /><path d="M3 4h4v4H3zM3 11h4v4H3zM3 18h4v4H3zM3 25h4v3H3z" fill="#d8e7f6" /><path d="M18 18h14v13H18z" fill="#0d2b50" stroke="#6da3d8" /><path d="M22 20l7 5-7 4z" fill="#c9e63c" /></Svg></TaskButton>
      <TaskButton aria-label="帮助"><Svg w={30} h={32}><path d="M4 12h13v17H4z" fill="#fff" stroke="#555" /><path d="M6 16h8M6 19h8M6 22h8M6 25h8" stroke="#777" /><path d="M13 9q0-6 6-6t6 5q0 4-6 7v4" stroke="#222" strokeWidth="6" /><path d="M13 9q0-6 6-6t6 5q0 4-6 7v4" stroke="#ffe600" strokeWidth="4" /><path d="M16.500 21.500h5v4h-5z" fill="#ffe600" stroke="#222" /></Svg></TaskButton>
      <TaskButton aria-label="Internet Explorer" $look="glow"><Svg w={34} h={34}><path d="M28.500 23A11 11 0 1 1 29 18H11" stroke="#1e86cf" strokeWidth="6" /><path d="M28 23A10.800 10.800 0 1 1 29 18H11" stroke="#4db9ee" strokeWidth="3.600" /><path d="M4 31C-1 27 6 13 18 6c7-4 12-4 12 0" stroke="#f2c22e" strokeWidth="2.600" /></Svg></TaskButton>
      <TaskButton aria-label="画图"><Svg w={34} h={34}><path d="M2 22C1 12 10 6 19 7c10 1 14 8 12 14-2 8-11 9-17 6-3-2-1-6-4-6s-3 4-8 1z" fill="#cfe0ec" stroke="#8ea7bb" /><circle cx="8" cy="17" r="2.800" fill="#d9534a" /><circle cx="13" cy="12" r="2.600" fill="#6cb35b" /><circle cx="20" cy="11" r="2.400" fill="#e8b94c" /><circle cx="16" cy="20" r="2.600" fill="#56789c" /><path d="M27 5L19 31" stroke="#d98a3d" strokeWidth="2.600" /><path d="M24 1l8 4-6 4z" fill="#c79a6d" /></Svg></TaskButton>
    </Apps>
    <Tray>
      <TrayItem aria-label="显示隐藏的图标"><Svg w={10} h={6}><path d="M0 6l5-5 5 5z" fill="#fff" /></Svg></TrayItem>
      <TrayItem aria-label="影片"><Svg w={14} h={16}><path d="M0 0h14v16H0z" fill="#222" /><path d="M4 1h6v6H4zM4 9h6v6H4z" fill="#fff" /><path d="M2 1v14M12 1v14" stroke="#ddd" strokeWidth="1.500" strokeDasharray="2 2" /></Svg></TrayItem>
      <TrayItem aria-label="录制"><Svg w={18}><path d="M5.500 1h7L17 5.500v7L12.500 17h-7L1 12.500v-7z" fill="#cf120c" stroke="#e8c9c5" /></Svg></TrayItem>
      <TrayItem aria-label="天气"><Svg w={18} h={20}><circle cx="12" cy="13" r="5.500" fill="#4e9be0" /><circle cx="13" cy="7" r="4" fill="#7cbcf0" /><circle cx="7" cy="8" r="6" fill="#f7b51c" /><circle cx="6" cy="6" r="2.500" fill="#fbdf80" /></Svg></TrayItem>
      <TrayItem aria-label="耳机" $dark><Svg w={18} h={14}><path d="M1 11q0-9 8-9t8 9z" fill="#f4f4f4" stroke="#333" /><path d="M6 11V7M9 11V7M12 11V7M4 12V9M14 12V9" stroke="#333" strokeWidth="1.300" /></Svg></TrayItem>
      <TrayItem aria-label="电源"><Svg w={18}><path d="M9 3h7v14H9z" fill="#8a6d69" stroke="#fff" strokeWidth="1.800" /><path d="M12 6v9" stroke="#fff" strokeWidth="2.500" /><path d="M1 5h6v4H1zM4 9v8M2.500 1v4M5.500 1v4" stroke="#fff" strokeWidth="1.600" /></Svg></TrayItem>
      <TrayItem aria-label="网络"><Svg w={18}><path d="M6 3h11v9H7M9 16h6M12 12v4" stroke="#fff" strokeWidth="1.600" /><path d="M2 2h4v4H2zM4 6v9h4" stroke="#eee" strokeWidth="1.400" /></Svg></TrayItem>
      <TrayItem aria-label="音量"><Svg w={10} h={16}><path d="M1 5h3l5-4v14l-5-4H1z" fill="#fff" stroke="#665" strokeWidth=".6" /></Svg></TrayItem>
      <TrayItem aria-label="输入法" $w={34}>中</TrayItem>
      <TrayItem aria-label="搜狗" $w={27}><Svg w={18}><path d="M1 1h16v16H1z" fill="#e4561c" stroke="#f8e2d8" strokeWidth="1.500" /><path d="M13 5.500H7q-2 0-2 1.700T7 9h4q2 0 2 1.800T11 12.500H5" stroke="#fff" strokeWidth="2.200" /></Svg></TrayItem>
      <TrayClock>15:15<br />2015/6/1</TrayClock>
    </Tray>
  </Taskbar>
);

export default function App() {
  return (
    <Player>
      <Global />
      <TopBar>
        <Zooms>
          <ZoomButton><Svg w={18} h={16}><path d="M1 1h16v14H1z" stroke="#b0b0b0" strokeWidth="2" /><path d="M6 6h6v4H6z" fill="#b0b0b0" /></Svg>50%</ZoomButton>
          <ZoomButton><Svg w={18} h={16}><path d="M1 1h16v14H1z" stroke="#b0b0b0" strokeWidth="2" /><path d="M5 5h8v6H5z" fill="#b0b0b0" /></Svg>75%</ZoomButton>
          <ZoomButton $on><Svg w={18} h={16}><path d="M0 0h18v16H0z" fill="#ff9400" /><path d="M2 2h14v3H2zM2 11h14v3H2z" fill="#000" /></Svg>100%</ZoomButton>
        </Zooms>
        <VideoTitle>腾讯视频</VideoTitle>
        <TopRight>
          <Clock>22:25</Clock>
          <TopIcon aria-label="收藏"><Svg w={26} h={22}><path d="M13 20L4 11Q0 6 3 3q5-4 10 2 5-6 9-2 3 3 1 7" stroke="#a0a0a0" strokeWidth="1.800" /><path d="M19 11v10M14 16h10" stroke="#a0a0a0" strokeWidth="1.800" /></Svg></TopIcon>
          <TopIcon aria-label="分享" $gap={20}><Svg w={22} h={20}><path d="M5 6H2v12h15v-4" stroke="#949494" strokeWidth="2.800" /><path d="M13 1l8 5.500-8 5.500V9Q8 8.500 5 14q0-9 8-10z" fill="#949494" /></Svg></TopIcon>
        </TopRight>
      </TopBar>
      <Frame>
        <Shade />
        <TitleBar>
          <Quick>
            <QuickButton aria-label="Word"><OfficeTile letter="W" size={18} /></QuickButton>
            <QuickButton aria-label="保存"><Svg w={18} h={16}><path d="M2 1h14v14H2z" stroke="#80479a" strokeWidth="2" /><path d="M5 1v5h8V1M6 15v-4h6v4" stroke="#80479a" strokeWidth="1.500" /></Svg></QuickButton>
            <QuickButton aria-label="撤消"><Svg w={18} h={16}><path d="M2 6h9q5 0 5 4t-4 4" stroke="#34639f" strokeWidth="2.600" /><path d="M7 1L1 6l6 5" stroke="#34639f" strokeWidth="2.400" /></Svg><Caret /></QuickButton>
            <QuickButton aria-label="重复"><Svg w={18} h={16}><path d="M6 3a6 6 0 1 0 6 0" stroke="#8a8a8a" strokeWidth="2" /><path d="M9 8V1h5" stroke="#8a8a8a" strokeWidth="2" /></Svg></QuickButton>
            <QuickButton aria-label="新建"><Svg w={18} h={16}><path d="M3 1h8l4 4v10H3zM11 1v4h4" stroke="#666" strokeWidth="1.400" /></Svg></QuickButton>
            <QuickButton aria-label="字体颜色"><Svg w={18} h={18}><path d="M5 11L9 1l4 10M6.500 8h5" stroke="#555" strokeWidth="2" /><path d="M1 13h16v4H1z" fill="#f01810" /></Svg><Caret /></QuickButton>
            <QuickButton aria-label="自定义"><Svg w={8} h={8}><path d="M1 1h6" stroke="#555" strokeWidth="1.500" /><path d="M0 4h8L4 8z" fill="#555" /></Svg></QuickButton>
          </Quick>
          <span>PHP基础1.docx [兼容模式] - Word</span>
          <WindowButtons>
            <WindowButton>?</WindowButton>
            <WindowButton aria-label="功能区选项"><Svg w={14} h={14}><path d="M1 2h12v10H1zM1 4h12M7 11V6M4.500 8L7 5.500 9.500 8" stroke="#444" strokeWidth="1.400" /></Svg></WindowButton>
            <WindowButton aria-label="最小化"><Svg w={12} h={14}><path d="M2 10h9" stroke="#444" strokeWidth="2" /></Svg></WindowButton>
            <WindowButton aria-label="还原"><Svg w={12} h={14}><path d="M1 6h7v6H1zM4 6V3h7v6H8" stroke="#444" strokeWidth="1.700" /></Svg></WindowButton>
            <WindowButton aria-label="关闭"><Close /></WindowButton>
          </WindowButtons>
        </TitleBar>
        <Tabs>
          <FileTab>文件</FileTab>
          {["开始", "插入", "设计", "页面布局", "引用", "邮件", "审阅", "视图", "加载项"].map((t) => <Tab key={t} $on={t === "插入"}>{t}</Tab>)}
          <Account><AccountName>登录</AccountName><Svg w={23} h={26}><path d="M0 0h23v26H0z" fill="#b3b5b4" /><circle cx="12" cy="10" r="5.500" fill="#fff" /><path d="M3 26v-4q0-6 6-6h6q6 0 6 6v4z" fill="#fff" /></Svg></Account>
        </Tabs>
        <WordRibbon />
        <Workspace>
          <Navigation />
          <Document />
          <Styles />
        </Workspace>
        <WordStatus />
        <WindowsTaskbar />
      </Frame>
      <Seek type="range" aria-label="播放进度" min="0" max="3237" defaultValue="2776" />
      <Controls>
        <Pause aria-label="暂停"><Svg w={16} h={17}><path d="M0 0h5v17H0zM10 0h5v17h-5z" fill="#a8a8a8" /></Svg></Pause>
        <Times><Now>46:16</Now>/53:57</Times>
        <ControlsRight>
          <Control aria-label="音量" $after={10}><Svg w={19}><circle cx="9.500" cy="9.500" r="9.200" fill="#9a9a9a" /><path d="M4 9.500L12.500 4v11z" fill="#232323" /></Svg></Control>
          <Quality>超清</Quality>
          <Control aria-label="设置" $after={11}><Svg w={20}><circle cx="10" cy="10" r="6" stroke="#8f8f8f" strokeWidth="2.600" /><circle cx="10" cy="10" r="8.500" stroke="#8f8f8f" strokeWidth="2.400" strokeDasharray="3 3.675" strokeDashoffset="1.500" /></Svg></Control>
          <Control aria-label="退出全屏" $after={14}><Svg w={15}><path d="M6 1v5H1M9 1v5h5M6 14V9H1M9 14V9h5" stroke="#8f8f8f" strokeWidth="1.600" /><path d="M1 1l5 5M14 1L9 6M1 14l5-5M14 14L9 9" stroke="#8f8f8f" strokeWidth="1.600" /></Svg></Control>
          <Brand href="#"><Svg w={22} h={20}><path d="M1 3Q2-1 7 1l12 6q5 3 0 6L7 19q-5 2-6-2-1-7 0-14z" fill="#2da7df" /><path d="M1 3Q3 0 6 3v14q-3 3-5 0-1-7 0-14z" fill="#f58b1c" /><path d="M4 4q1-1 3 0l10 5q2 1 0 2L7 16q-2 1-3 0-1-6 0-12z" fill="#6fbf2e" /><path d="M7 6l7 4-7 4z" fill="#fff" /></Svg>腾讯视频</Brand>
        </ControlsRight>
      </Controls>
    </Player>
  );
}
